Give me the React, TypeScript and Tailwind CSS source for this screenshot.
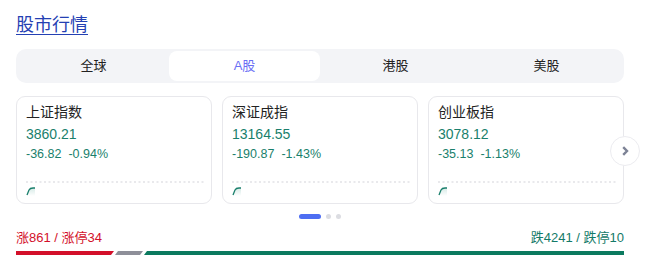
import React from "react";

const font = { fontFamily: '"Liberation Sans", Arial, "Noto Sans CJK SC", sans-serif' };

const cards = [
  { name: "上证指数", value: "3860.21", change: "-36.82", pct: "-0.94%" },
  { name: "深证成指", value: "13164.55", change: "-190.87", pct: "-1.43%" },
  { name: "创业板指", value: "3078.12", change: "-35.13", pct: "-1.13%" },
];

function Spark() {
  return (
    <svg width="14" height="10" viewBox="0 0 14 10">
      <defs>
        <linearGradient id="g" x1="0" y1="0" x2="0" y2="1">
          <stop offset="0" stopColor="#1a8a74" stopOpacity="0.18" />
          <stop offset="1" stopColor="#1a8a74" stopOpacity="0" />
        </linearGradient>
      </defs>
      <path d="M1 9 L3 4 Q4 2 7 2 L9 2 L9 10 L1 10 Z" fill="url(#g)" />
      <path d="M1 9 L3 4 Q4 2 7 2 L9 2" fill="none" stroke="#1a7f6c" strokeWidth="1.3" />
    </svg>
  );
}

export default function App() {
  const tabs = ["全球", "A股", "港股", "美股"];
  return (
    <div className="w-[646px] h-[263px] bg-white px-4 pt-[13px]" style={font}>
      <div className="w-[608px]">
        <div className="text-[18px] leading-[24px] text-[#2440b3] underline underline-offset-[3px] decoration-1 w-fit">
          股市行情
        </div>
        <div className="mt-[12px] w-[608px] h-[34px] bg-[#f3f4f7] rounded-[10px] p-[2px] flex">
          {tabs.map((t, i) => (
            <div
              key={t}
              className={
                "flex-1 flex items-center justify-center text-[13px] rounded-[8px] " +
                (i === 1 ? "bg-white text-[#6a6ff5]" : "text-[#222]")
              }
            >
              {t}
            </div>
          ))}
        </div>
        <div className="relative mt-[13px] flex gap-[10px]">
          {cards.map((c) => (
            <div
              key={c.name}
              className="w-[196px] h-[108px] border border-[#e8e8ec] rounded-[9px] px-[9px] pt-[5px] flex flex-col"
            >
              <div className="text-[14px] leading-[20px] text-[#222]">{c.name}</div>
              <div className="text-[14px] leading-[18px] mt-[3px] text-[#1a7f6c]">{c.value}</div>
              <div className="text-[12.5px] leading-[16px] mt-[3px] text-[#1a7f6c] flex gap-[7px]">
                <span>{c.change}</span>
                <span>{c.pct}</span>
              </div>
              <svg className="mt-[19px]" width="178" height="2" viewBox="0 0 178 2">
                <line x1="0" y1="1" x2="178" y2="1" stroke="#e2e2e6" strokeWidth="1.3" strokeDasharray="2 2.5" />
              </svg>
              <div className="mt-[3px] flex">
                <Spark />
              </div>
            </div>
          ))}
          <div className="absolute left-[594px] top-[40px] w-[30px] h-[30px] rounded-full bg-white border border-[#ececf0] flex items-center justify-center">
            <svg width="12" height="12" viewBox="0 0 12 12">
              <path d="M4.2 2.2 L8 6 L4.2 9.8" fill="none" stroke="#7d8396" strokeWidth="2.4" />
            </svg>
          </div>
        </div>
        <div className="mt-[10px] flex justify-center items-center gap-[5px]">
          <div className="w-[22px] h-[5px] rounded-full bg-[#4e6ef2]" />
          <div className="w-[5px] h-[5px] rounded-full bg-[#dcdde2]" />
          <div className="w-[5px] h-[5px] rounded-full bg-[#dcdde2]" />
        </div>
        <div className="mt-[11px] flex justify-between text-[13px] leading-[16px]">
          <span className="text-[#d3102a]">涨861 / 涨停34</span>
          <span className="text-[#147a68]">跌4241 / 跌停10</span>
        </div>
        <div className="mt-[5px] flex h-[4px] w-[608px]">
          <div className="w-[98px] bg-[#d3102a]" style={{ clipPath: "polygon(0 0, 100% 0, calc(100% - 3px) 100%, 0 100%)" }} />
          <div className="w-[28px] ml-[1px] bg-[#8e8f99]" style={{ clipPath: "polygon(3px 0, 100% 0, calc(100% - 3px) 100%, 0 100%)" }} />
          <div className="flex-1 ml-[1px] bg-[#0b7a5f]" style={{ clipPath: "polygon(3px 0, 100% 0, 100% 100%, 0 100%)" }} />
        </div>
      </div>
    </div>
  );
}
